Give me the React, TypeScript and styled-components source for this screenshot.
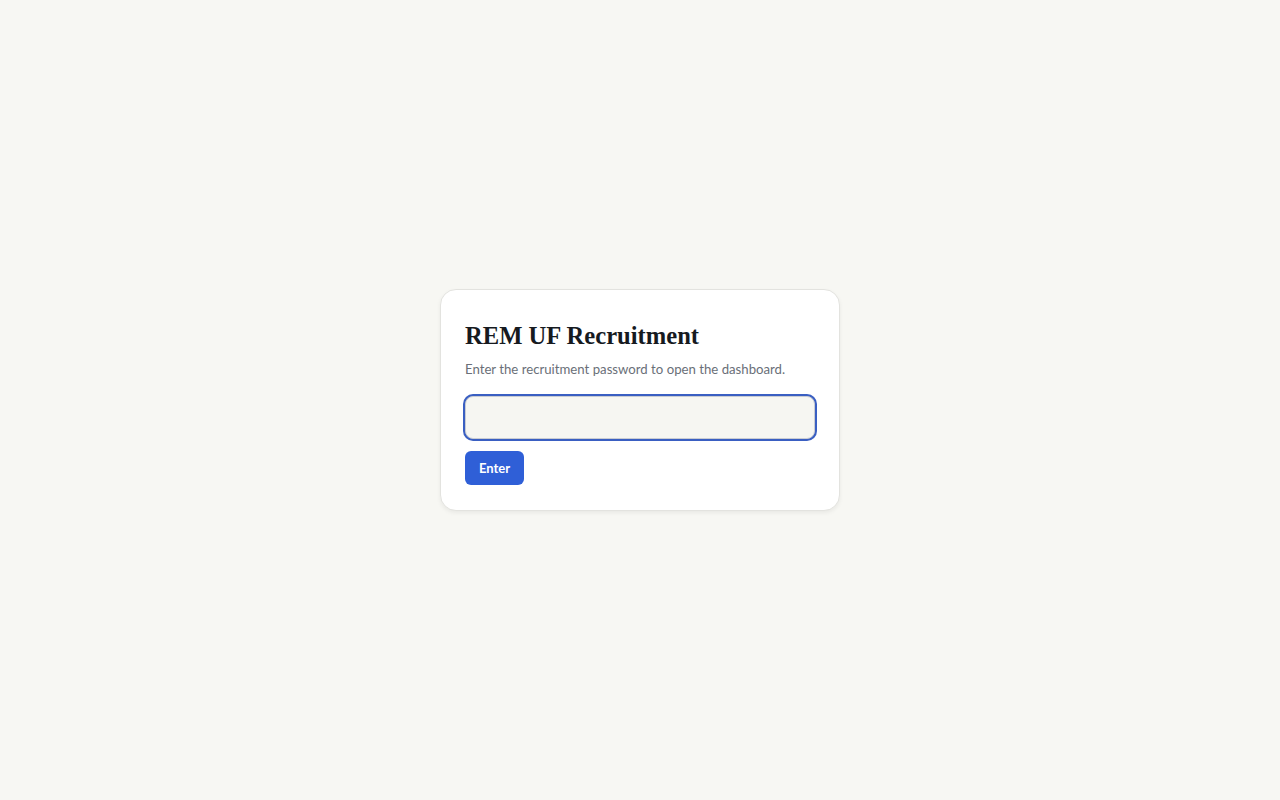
import React from "react";
import styled, { createGlobalStyle } from "styled-components";

const GlobalStyle = createGlobalStyle`
  html, body {
    margin: 0;
    padding: 0;
    background: #f7f7f3;
  }
  body {
    font-family: Lato, "Noto Sans", sans-serif;
  }
  * {
    box-sizing: border-box;
  }
`;

const Page = styled.main`
  min-height: 100vh;
  display: flex;
  align-items: center;
  justify-content: center;
`;

const Card = styled.form`
  width: 400px;
  background: #ffffff;
  border: 1px solid #e3e3df;
  border-radius: 16px;
  box-shadow: 0 2px 4px rgba(20, 20, 20, 0.06);
  padding: 24px 24px 25px;
  display: flex;
  flex-direction: column;
`;

const Title = styled.h1`
  margin: 7px 0 0;
  font-family: "Liberation Serif", "DejaVu Serif", serif;
  font-weight: 700;
  font-size: 24.6px;
  line-height: 30px;
  color: #161a1f;
`;

const Subtitle = styled.p`
  margin: 8px 0 0;
  font-size: 13.2px;
  line-height: 20px;
  color: #6a6f78;
`;

const PasswordInput = styled.input.attrs({ type: "password" })`
  margin-top: 17px;
  width: 100%;
  height: 43px;
  border: 1px solid #c9ccd3;
  border-radius: 8px;
  background: #f6f6f2;
  box-shadow: 0 0 0 2px #3a5fc2;
  outline: none;
  padding: 0 12px;
  font-size: 14px;
`;

const Actions = styled.div`
  margin-top: 12px;
  display: flex;
`;

const Button = styled.button`
  height: 34px;
  padding: 0 14px;
  border: none;
  border-radius: 6px;
  background: #2f5fd7;
  color: #ffffff;
  font-family: Lato, "Noto Sans", sans-serif;
  font-weight: 700;
  font-size: 13px;
  cursor: pointer;
`;

export default function App() {
  return (
    <>
      <GlobalStyle />
      <Page>
        <Card onSubmit={(e) => e.preventDefault()}>
          <Title>REM UF Recruitment</Title>
          <Subtitle>Enter the recruitment password to open the dashboard.</Subtitle>
          <PasswordInput />
          <Actions>
            <Button type="submit">Enter</Button>
          </Actions>
        </Card>
      </Page>
    </>
  );
}
